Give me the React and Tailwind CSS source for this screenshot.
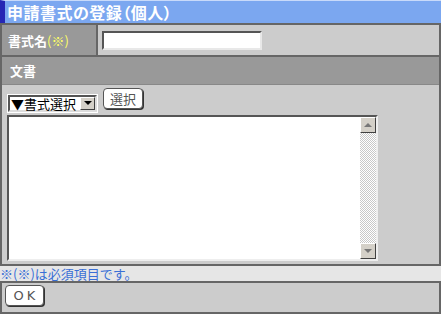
import React from 'react';

const jp = { fontFamily: '"Noto Sans CJK JP", "Noto Sans", sans-serif' };

const ScrollButton = ({ down }) => (
  <div className="w-[16px] h-[16px] bg-[#d4d0c8] border border-t-white border-l-white border-b-[#404040] border-r-[#404040] flex items-center justify-center">
    <svg width="8" height="5" viewBox="0 0 8 5">
      {down ? <polygon points="0,0 8,0 4,4" fill="#777" /> : <polygon points="4,0 8,4 0,4" fill="#777" />}
    </svg>
  </div>
);

const App = () => {
  return (
    <div className="w-[442px] h-[316px] bg-white overflow-hidden" style={jp}>
      <div className="w-[441px]">
        {/* Title */}
        <div className="h-[23px] bg-[#7ba7f0] border-l-[5px] border-[#2626b4] flex items-center pl-[2px] border-t border-t-[#c8dafa]">
          <span className="text-white font-bold text-[16px] leading-none [font-feature-settings:'palt'] tracking-[0.5px]">申請書式の登録（個人）</span>
        </div>

        {/* Form box */}
        <div className="border-2 border-[#666] border-b-0">
          {/* Row: name */}
          <div className="flex h-[30px]">
            <div className="w-[94px] bg-[#999] flex items-center pl-[6px] text-[13px] font-bold leading-none">
              <span className="text-white">書式名</span>
              <span className="text-[#ffff66] font-normal">(※)</span>
            </div>
            <div className="flex-1 bg-[#ccc] border-l-2 border-[#666] flex items-center pl-[4px]">
              <div className="w-[160px] h-[19px] bg-white border-2 border-t-[#555] border-l-[#555] border-b-[#e8e8e8] border-r-[#e8e8e8]" />
            </div>
          </div>

          {/* Header: 文書 */}
          <div className="h-[29px] bg-[#999] border-t-2 border-[#666] flex items-center pl-[8px]">
            <span className="text-white font-bold text-[13px] leading-none">文書</span>
          </div>

          {/* Content */}
          <div className="h-[180px] bg-[#ccc] border-t border-[#888] pl-[5px] pt-[2px]">
            <div className="flex items-end h-[26px]">
              <div className="h-[19px] w-[91px] bg-white border border-white flex">
                <div className="flex-1 flex border-2 border-t-[#555] border-l-[#555] border-b-[#ddd] border-r-[#ddd]">
                  <div className="flex-1 flex items-center text-[13px] leading-[13px] text-black whitespace-nowrap pl-[1px]">▼書式選択</div>
                  <div className="w-[15px] bg-[#d4d0c8] border border-t-white border-l-white border-b-[#404040] border-r-[#404040] flex items-center justify-center">
                    <svg width="8" height="5" viewBox="0 0 8 5"><polygon points="0,0 8,0 4,4" fill="#000" /></svg>
                  </div>
                </div>
              </div>
              <div className="ml-[5px] mb-[4px] w-[40px] h-[21px] bg-white border border-[#555] rounded-[4px] shadow-[1px_1px_0_#333] flex items-center justify-center text-[13px] leading-none text-[#555]">
                選択
              </div>
            </div>
            <div className="mt-[2px] w-[371px] h-[146px] bg-white border-2 border-t-[#555] border-l-[#555] border-b-[#eee] border-r-[#eee] flex justify-end">
              <div className="w-[16px] h-full flex flex-col bg-[repeating-conic-gradient(#c8c8c8_0%_25%,#ffffff_0%_50%)] bg-[length:2px_2px]">
                <ScrollButton />
                <div className="flex-1" />
                <ScrollButton down />
              </div>
            </div>
          </div>
        </div>

        {/* Note strip */}
        <div className="h-[17px] bg-[#e6e6e6] border-t-2 border-[#666] flex items-center text-[13px] leading-none text-[#3a6fd6]">
          ※(※)は必須項目です。
        </div>

        {/* Bottom box */}
        <div className="h-[33px] bg-[#ccc] border-2 border-[#666] pl-[3px] pt-[2px]">
          <div className="w-[39px] h-[21px] bg-white border border-[#555] rounded-[4px] shadow-[1px_1px_0_#333] flex items-center justify-center text-[13px] leading-none text-[#555] tracking-[3px] pl-[3px]" style={{ fontFamily: '"DejaVu Sans", sans-serif' }}>
            OK
          </div>
        </div>
      </div>
    </div>
  );
};

export default App;
